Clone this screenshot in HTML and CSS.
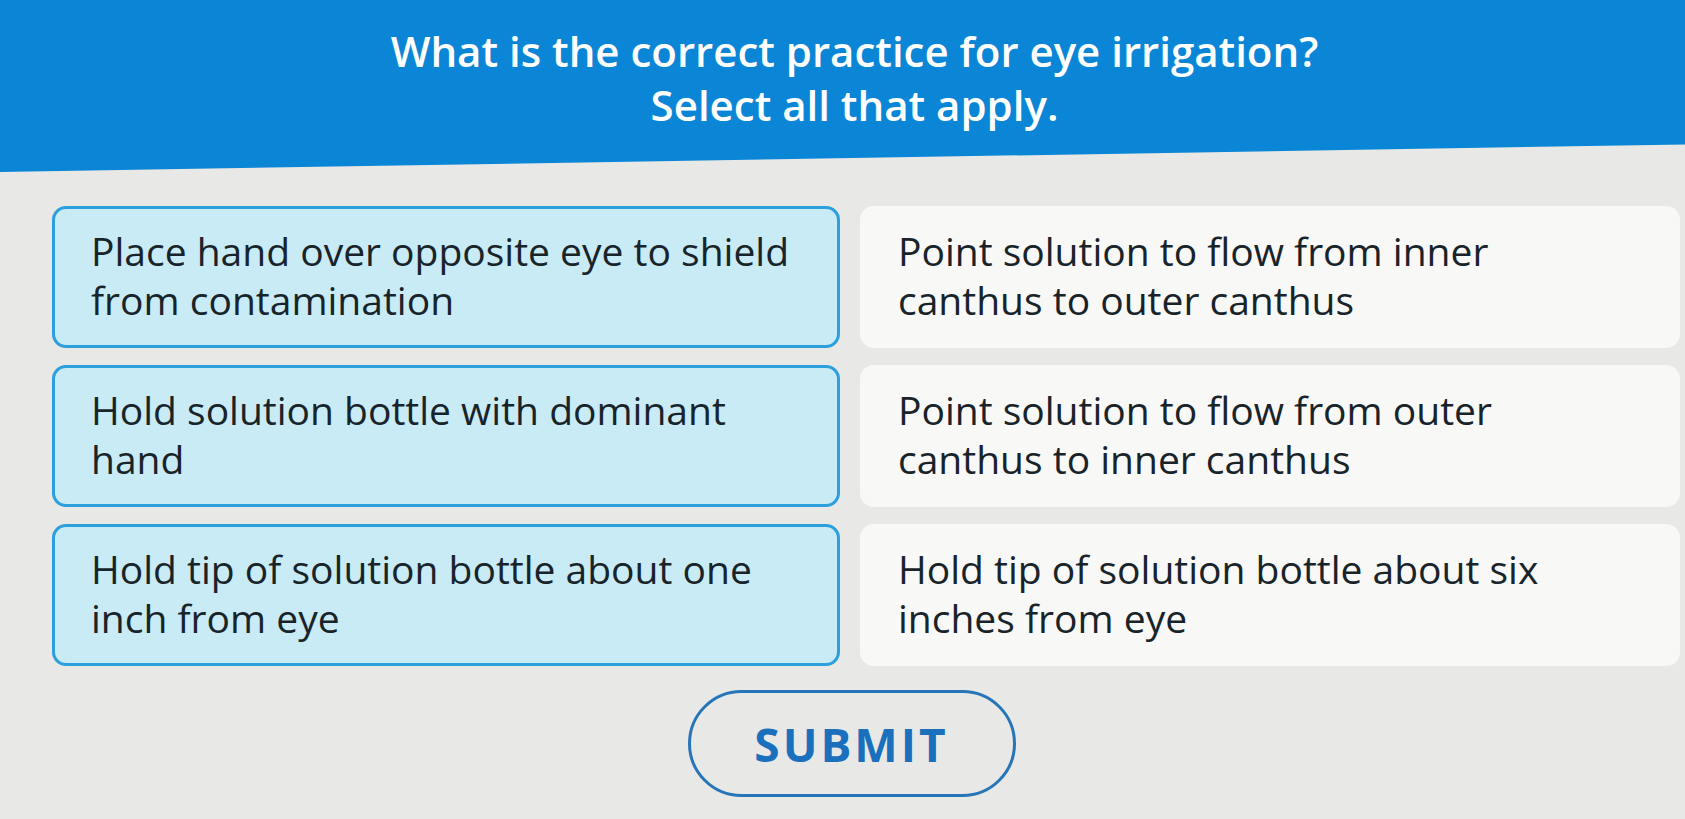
FILE: index.html
```html
<!DOCTYPE html>
<html lang="en">
<head>
    <meta charset="UTF-8">
    <meta name="viewport" content="width=device-width, initial-scale=1.0">
    <title>Eye Irrigation Question</title>
    <link rel="stylesheet" href="styles.css">
</head>
<body>

    <header class="question">
        <h1>What is the correct practice for eye irrigation?<br>Select all that apply.</h1>
    </header>

    <main class="quiz">
        <div class="options">
            <div class="option selected">Place hand over opposite eye to shield from contamination</div>
            <div class="option">Point solution to flow from inner canthus to outer canthus</div>
            <div class="option selected">Hold solution bottle with dominant hand</div>
            <div class="option">Point solution to flow from outer canthus to inner canthus</div>
            <div class="option selected">Hold tip of solution bottle about one inch from eye</div>
            <div class="option">Hold tip of solution bottle about six inches from eye</div>
        </div>

        <div class="actions">
            <button type="button" class="submit">SUBMIT</button>
        </div>
    </main>

</body>
</html>
```
FILE: styles.css
```css
body {
    margin: 0;
    font-family: "Open Sans", "Noto Sans", sans-serif;
    background-color: #e8e8e6;
    color: #18242a;
}
.question {
    background-color: #0b86d6;
    height: 172px;
    box-sizing: border-box;
    padding: 24px 0 0 24px;
    text-align: center;
    /* bottom edge runs slightly uphill to the right */
    clip-path: polygon(0 0, 100% 0, 100% 84%, 0 100%);
}
.question h1 {
    margin: 0;
    color: #ffffff;
    font-size: 42px;
    font-weight: 600;
    line-height: 54px;
}
.quiz {
    padding: 34px 6px 0 52px;
}
.options {
    display: grid;
    grid-template-columns: 788px 820px;
    column-gap: 20px;
    row-gap: 17px;
}
.option {
    height: 142px;
    box-sizing: border-box;
    padding: 20px 34px 0 39px;
    font-size: 39px;
    line-height: 49px;
    background-color: #f8f8f7;
    border-radius: 14px;
}
.option:nth-child(even) {
    padding-left: 38px;
    padding-right: 70px;
}
.option.selected {
    padding-top: 17px;
    padding-left: 36px;
    background-color: #c8ebf6;
    border: 3px solid #2ba0dc;
}
.actions {
    display: flex;
    justify-content: center;
    padding: 24px 0 0 0;
    margin-left: -28px;
}
.submit {
    width: 328px;
    height: 107px;
    border: 3px solid #2775b8;
    border-radius: 54px;
    background-color: transparent;
    color: #1a70bd;
    font-family: inherit;
    font-size: 46px;
    font-weight: 700;
    letter-spacing: 3px;
    cursor: pointer;
}
```
